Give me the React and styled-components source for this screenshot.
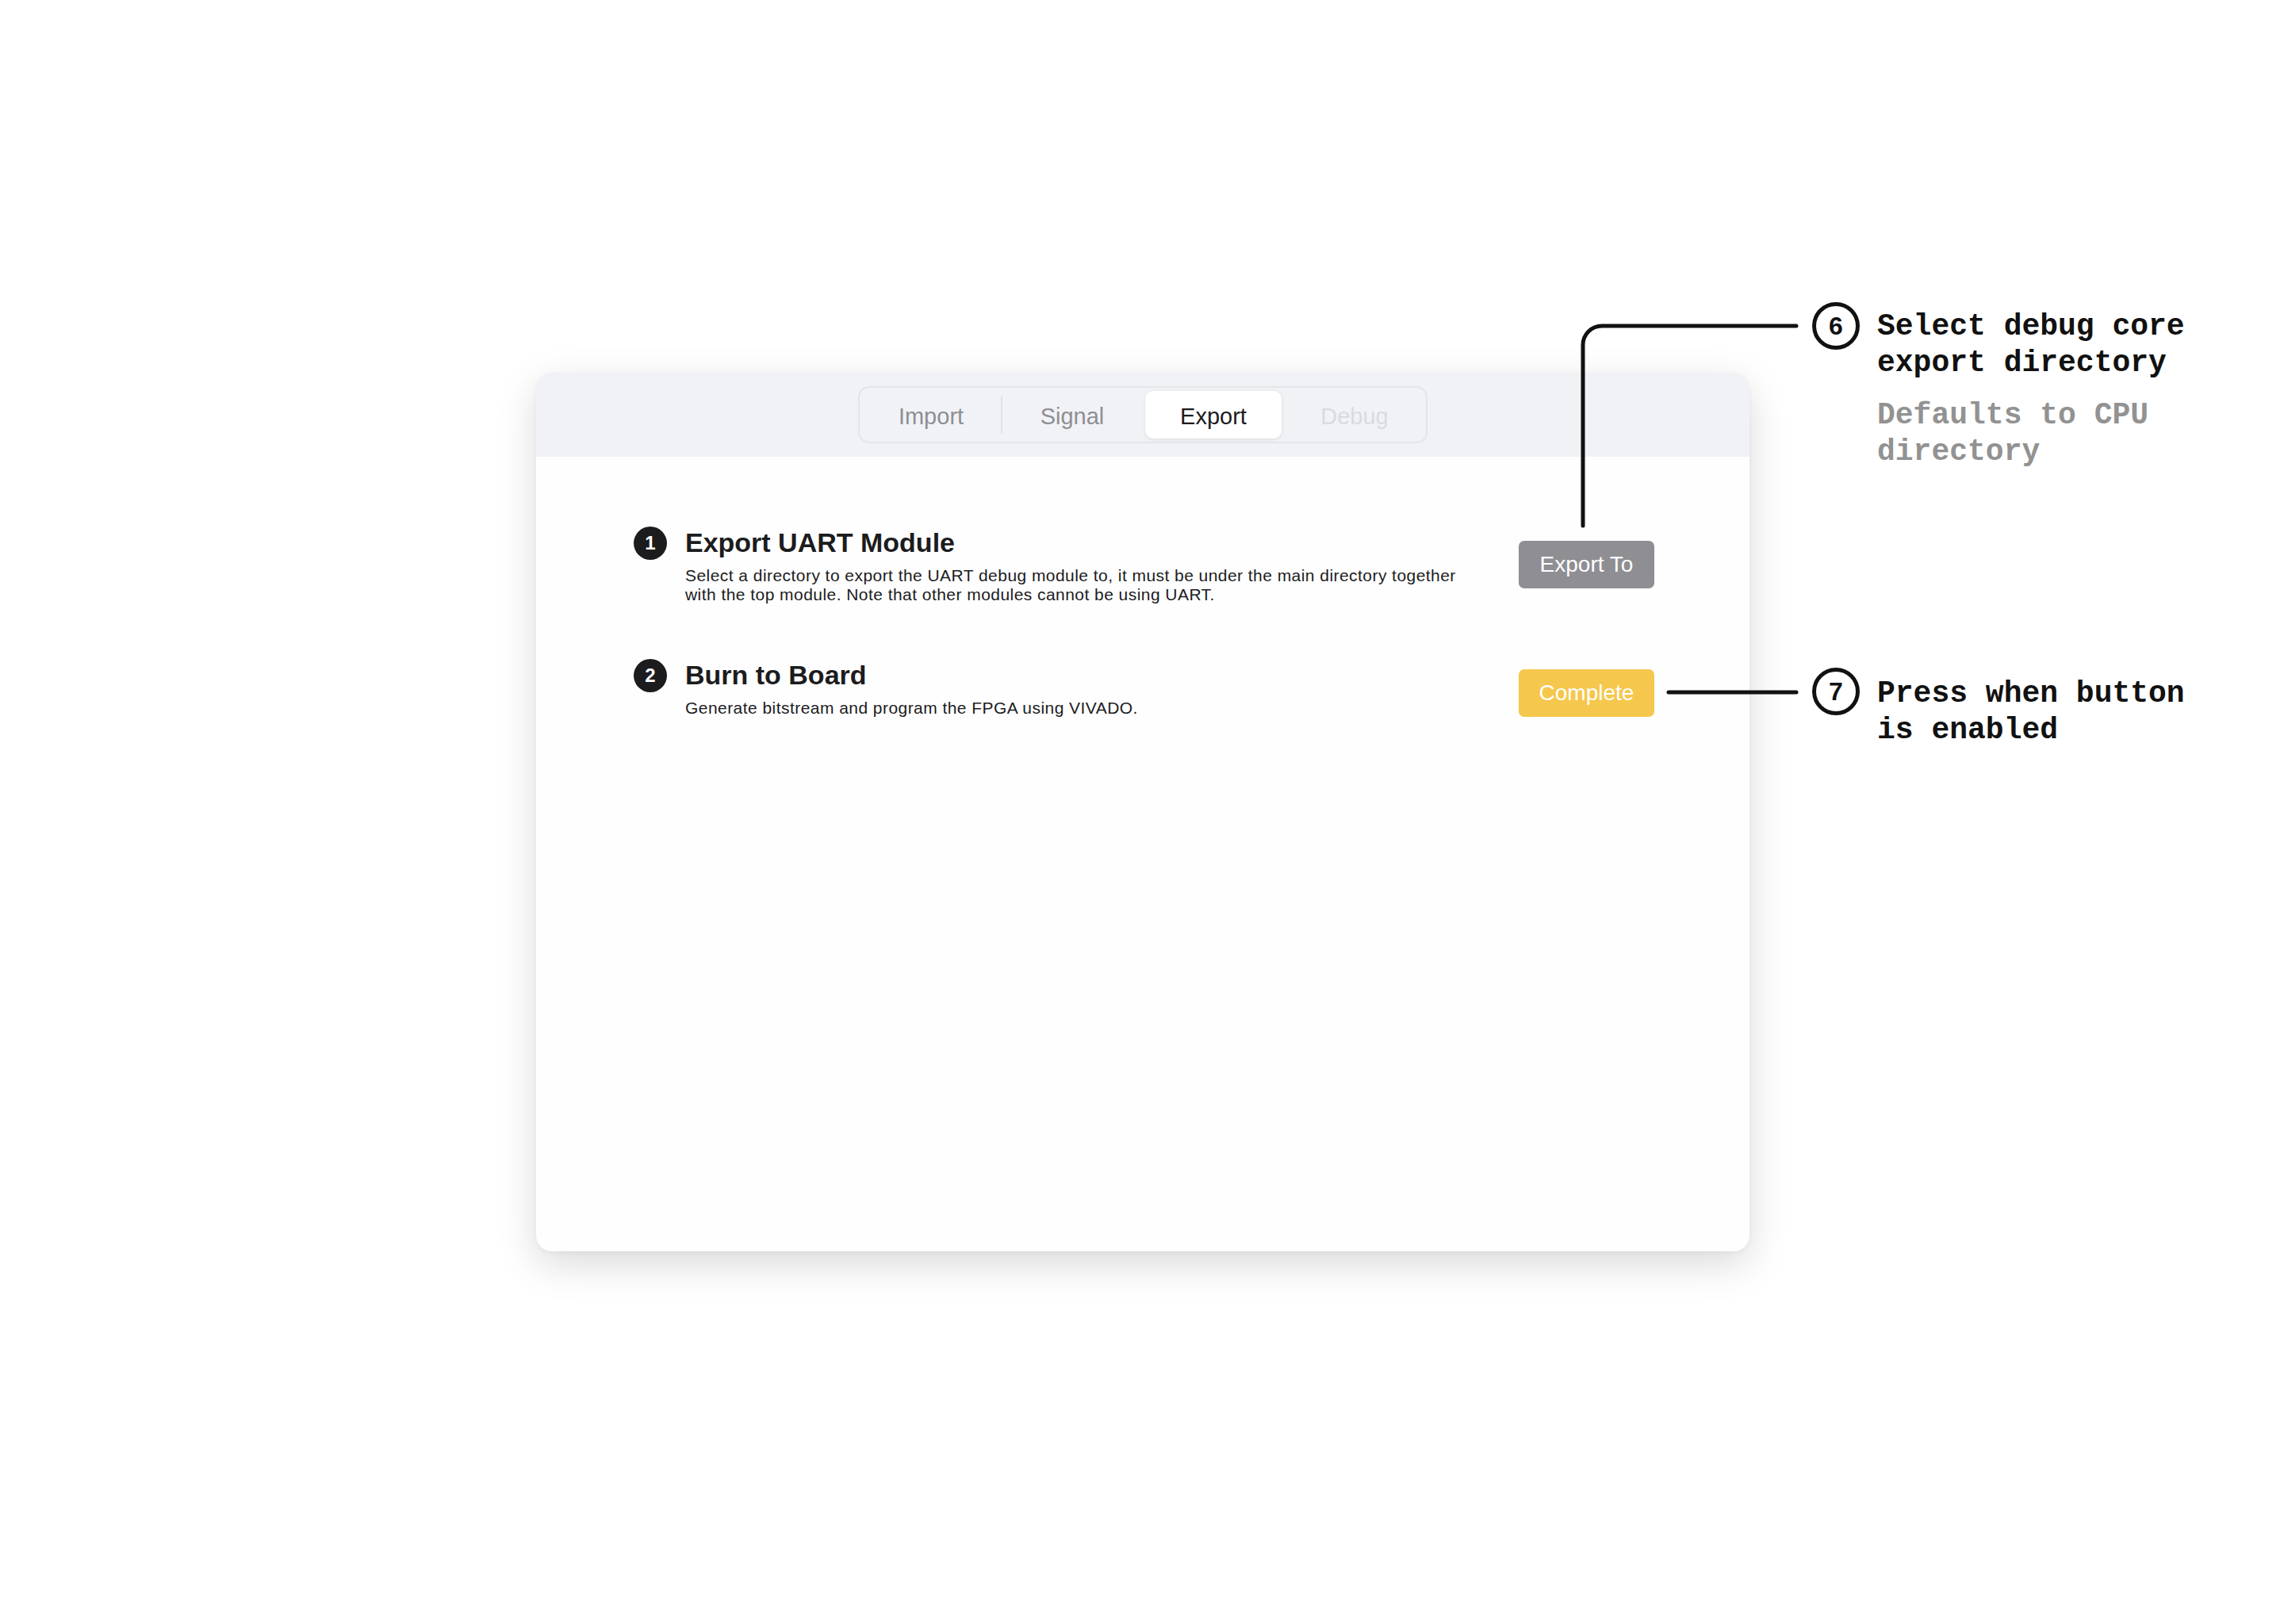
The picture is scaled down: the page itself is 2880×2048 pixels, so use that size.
import React from 'react';
import styled, { createGlobalStyle } from 'styled-components';

const GlobalStyle = createGlobalStyle`
  html, body {
    margin: 0;
    padding: 0;
    background: #ffffff;
  }
  body {
    font-family: "Liberation Sans", Arial, sans-serif;
    -webkit-font-smoothing: antialiased;
  }
`;

const Stage = styled.div`
  position: relative;
  width: 2880px;
  height: 2048px;
  padding: 470px 0 0 676px;
  box-sizing: border-box;
  background: #ffffff;
  overflow: hidden;
`;

const Window = styled.div`
  width: 1530px;
  height: 1108px;
  border-radius: 20px;
  background: #fefefe;
  box-shadow: 0 16px 50px rgba(0, 0, 0, 0.15), 0 2px 6px rgba(0, 0, 0, 0.04);
  display: flex;
  flex-direction: column;
  overflow: hidden;
`;

const Header = styled.div`
  height: 106px;
  flex-shrink: 0;
  background: #f1f2f5;
  display: flex;
  align-items: center;
  justify-content: center;
`;

const TabGroup = styled.div`
  display: flex;
  gap: 6px;
  padding: 4px;
  border: 2px solid #e4e5e9;
  border-radius: 14px;
  background: #f1f2f5;
`;

const Tab = styled.div`
  position: relative;
  width: 172px;
  height: 60px;
  box-sizing: border-box;
  padding-top: 5px;
  border-radius: 10px;
  display: flex;
  align-items: center;
  justify-content: center;
  font-size: 29px;
  color: ${p => (p.$active ? '#1c1c1e' : p.$disabled ? '#dadbdf' : '#8e8e93')};
  background: ${p => (p.$active ? '#ffffff' : 'transparent')};
  box-shadow: ${p => (p.$active ? '0 1px 4px rgba(0, 0, 0, 0.10)' : 'none')};

  ${p => p.$divider && `
    &::after {
      content: '';
      position: absolute;
      right: -4px;
      top: 6px;
      bottom: 7px;
      width: 2px;
      background: #e0e1e5;
    }
  `}
`;

const Body = styled.div`
  flex: 1;
  padding: 88px 120px 0 123px;
  display: flex;
  flex-direction: column;
  gap: 69px;
`;

const Step = styled.div`
  display: flex;
  align-items: flex-start;
  justify-content: space-between;
`;

const StepMain = styled.div`
  display: flex;
  gap: 23px;
  align-items: flex-start;
`;

const StepNumber = styled.div`
  width: 42px;
  height: 42px;
  flex-shrink: 0;
  border-radius: 50%;
  background: #1c1c1e;
  color: #ffffff;
  display: flex;
  align-items: center;
  justify-content: center;
  font-size: 24px;
  font-weight: 700;
`;

const StepText = styled.div`
  display: flex;
  flex-direction: column;
  gap: 10px;
`;

const StepTitle = styled.div`
  font-size: 34px;
  line-height: 40px;
  font-weight: 700;
  color: #1c1c1e;
`;

const StepDesc = styled.div`
  max-width: 1010px;
  font-size: 21px;
  letter-spacing: 0.45px;
  line-height: 24px;
  color: #1c1c1e;
`;

const ActionButton = styled.div`
  width: 171px;
  height: 60px;
  margin-top: ${p => p.$offset}px;
  flex-shrink: 0;
  border-radius: 7px;
  background: ${p => p.$color};
  color: #ffffff;
  display: flex;
  align-items: center;
  justify-content: center;
  font-size: 28px;
`;

const Wires = styled.svg`
  position: absolute;
  left: 0;
  top: 0;
  pointer-events: none;
`;

const Callout = styled.div`
  position: absolute;
  left: 2285px;
  top: ${p => p.$top}px;
  display: flex;
  gap: 22px;
  align-items: flex-start;
`;

const CalloutBadge = styled.div`
  width: 60px;
  height: 60px;
  box-sizing: border-box;
  flex-shrink: 0;
  border: 5px solid #111111;
  border-radius: 50%;
  display: flex;
  align-items: center;
  justify-content: center;
  font-family: "Liberation Sans", Arial, sans-serif;
  font-size: 32px;
  font-weight: 700;
  color: #111111;
`;

const CalloutText = styled.div`
  padding-top: ${p => p.$pad}px;
  display: flex;
  flex-direction: column;
  gap: 20px;
`;

const CalloutLine = styled.div`
  font-family: "Liberation Mono", "Courier New", monospace;
  font-weight: 700;
  font-size: 38px;
  line-height: 46px;
  color: ${p => (p.$muted ? '#929292' : '#111111')};
  white-space: pre-line;
`;

const tabs = [
  { label: 'Import', divider: true },
  { label: 'Signal' },
  { label: 'Export', active: true },
  { label: 'Debug', disabled: true },
];

const steps = [
  {
    n: 1,
    title: 'Export UART Module',
    desc: 'Select a directory to export the UART debug module to, it must be under the main directory together with the top module. Note that other modules cannot be using UART.',
    button: 'Export To',
    color: '#8e8e93',
    offset: 18,
  },
  {
    n: 2,
    title: 'Burn to Board',
    desc: 'Generate bitstream and program the FPGA using VIVADO.',
    button: 'Complete',
    color: '#f6c74d',
    offset: 13,
  },
];

export default function App() {
  return (
    <>
      <GlobalStyle />
      <Stage>
        <Window>
          <Header>
            <TabGroup>
              {tabs.map(t => (
                <Tab key={t.label} $active={t.active} $disabled={t.disabled} $divider={t.divider}>
                  {t.label}
                </Tab>
              ))}
            </TabGroup>
          </Header>
          <Body>
            {steps.map(s => (
              <Step key={s.n}>
                <StepMain>
                  <StepNumber>{s.n}</StepNumber>
                  <StepText>
                    <StepTitle>{s.title}</StepTitle>
                    <StepDesc>{s.desc}</StepDesc>
                  </StepText>
                </StepMain>
                <ActionButton $color={s.color} $offset={s.offset}>{s.button}</ActionButton>
              </Step>
            ))}
          </Body>
        </Window>

        <Wires width="2880" height="2048" viewBox="0 0 2880 2048">
          <path
            d="M1996 663 V435 A24 24 0 0 1 2020 411 H2265"
            fill="none"
            stroke="#111111"
            strokeWidth="5"
            strokeLinecap="round"
          />
          <path
            d="M2104 873 H2265"
            fill="none"
            stroke="#111111"
            strokeWidth="5"
            strokeLinecap="round"
          />
        </Wires>

        <Callout $top={381}>
          <CalloutBadge>6</CalloutBadge>
          <CalloutText $pad={8}>
            <CalloutLine>{'Select debug core\nexport directory'}</CalloutLine>
            <CalloutLine $muted>{'Defaults to CPU\ndirectory'}</CalloutLine>
          </CalloutText>
        </Callout>

        <Callout $top={842}>
          <CalloutBadge>7</CalloutBadge>
          <CalloutText $pad={10}>
            <CalloutLine>{'Press when button\nis enabled'}</CalloutLine>
          </CalloutText>
        </Callout>
      </Stage>
    </>
  );
}
